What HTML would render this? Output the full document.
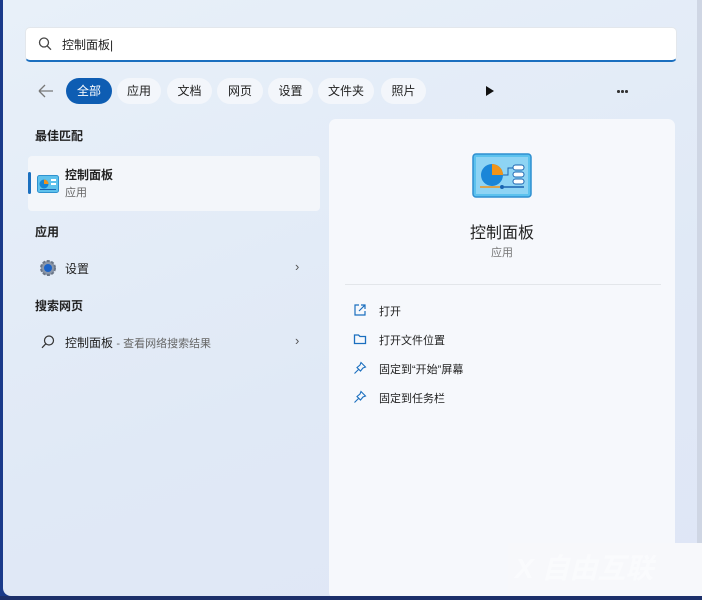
<!DOCTYPE html><html><head><meta charset="utf-8"><style>
body{margin:0;width:702px;height:600px;overflow:hidden;background:#1a3a8a;font-family:"Liberation Sans","Noto Sans CJK SC",sans-serif;position:relative}
.win{position:absolute;left:3px;top:-8px;width:694px;height:604px;border-radius:8px;background:linear-gradient(160deg,#e8f0f9,#e0e9f6 60%,#dfe6f6);}
.abs{position:absolute}
.search{left:25px;top:27px;width:650px;height:32px;background:#fff;border-radius:5px;border:1px solid #e3e7ec;border-bottom:2px solid #1b6fbf;box-sizing:content-box}
.chip{position:absolute;top:78px;height:26px;line-height:26px;border-radius:13px;background:#f3f6fb;font-size:12px;color:#222;text-align:center}
.hdr{font-size:12px;font-weight:bold;color:#222}
.right{left:329px;top:119px;width:346px;height:480px;background:#f6f8fc;border-radius:7px}
.act{position:absolute;left:379px;font-size:11px;color:#222}
.dot{position:absolute;top:90px;width:2.5px;height:2.5px;border-radius:50%;background:#333}
</style></head><body>
<div class="abs" style="left:697px;top:0;width:5px;height:545px;background:#cfd6e4"></div>
<div class="win"></div>
<div class="abs search"></div>
<svg class="abs" style="left:37px;top:36px" width="16" height="16"><circle cx="7" cy="6.5" r="4.5" fill="none" stroke="#444" stroke-width="1.3"/><line x1="10.3" y1="10" x2="14" y2="13.7" stroke="#444" stroke-width="1.3"/></svg>
<div class="abs" style="left:62px;top:36px;font-size:12px;color:#222">控制面板|</div>
<svg class="abs" style="left:37px;top:83px" width="18" height="16"><path d="M2 8H16M2 8L8 2M2 8L8 14" fill="none" stroke="#777" stroke-width="1.3"/></svg>
<div class="chip" style="left:66px;width:46px;background:#0e5db3;color:#fff">全部</div>
<div class="chip" style="left:117px;width:44px">应用</div>
<div class="chip" style="left:167px;width:45px">文档</div>
<div class="chip" style="left:217px;width:46px">网页</div>
<div class="chip" style="left:268px;width:45px">设置</div>
<div class="chip" style="left:318px;width:56px">文件夹</div>
<div class="chip" style="left:381px;width:45px">照片</div>
<svg class="abs" style="left:485px;top:85px" width="10" height="12"><path d="M1 1L9 6L1 11Z" fill="#111"/></svg>
<div class="dot" style="left:617px"></div><div class="dot" style="left:621px"></div><div class="dot" style="left:625px"></div>
<div class="abs hdr" style="left:35px;top:127px">最佳匹配</div>
<div class="abs" style="left:28px;top:156px;width:292px;height:55px;background:#f3f6fa;border-radius:4px"></div>
<div class="abs" style="left:28px;top:172px;width:3px;height:22px;background:#1b6fbf;border-radius:2px"></div>
<svg class="abs" style="left:37px;top:175px" width="22" height="18"><rect x="0.5" y="0.5" width="21" height="17" rx="2" fill="#5ec1ec" stroke="#2f92cf"/><circle cx="7" cy="9" r="4.5" fill="#1685d6"/><path d="M7 4.5A4.5 4.5 0 0 1 11.5 9H7Z" fill="#f2931b"/><rect x="14" y="4" width="5" height="2" fill="#fff"/><rect x="14" y="8" width="5" height="2" fill="#fff"/><rect x="3" y="14" width="16" height="1" fill="#1a64b0"/></svg>
<div class="abs" style="left:65px;top:166px;font-size:12px;font-weight:bold;color:#222">控制面板</div>
<div class="abs" style="left:65px;top:184px;font-size:11px;color:#666">应用</div>
<div class="abs hdr" style="left:35px;top:223px">应用</div>
<svg class="abs" style="left:38px;top:259px" width="20" height="18"><circle cx="10" cy="9" r="7" fill="#8a96a8" stroke="#6b7687" stroke-dasharray="3 1.5" stroke-width="2"/><circle cx="10" cy="9" r="4" fill="#1b63c8"/></svg>
<div class="abs" style="left:65px;top:260px;font-size:12px;color:#222">设置</div>
<div class="abs" style="left:295px;top:259px;font-size:13px;color:#555">›</div>
<div class="abs hdr" style="left:35px;top:297px">搜索网页</div>
<svg class="abs" style="left:40px;top:334px" width="16" height="16"><circle cx="9" cy="6.5" r="4.5" fill="none" stroke="#333" stroke-width="1.2"/><line x1="5.8" y1="9.8" x2="2" y2="13.8" stroke="#333" stroke-width="1.2"/></svg>
<div class="abs" style="left:65px;top:334px;font-size:12px;color:#222">控制面板 <span style="font-size:11px;color:#666">- 查看网络搜索结果</span></div>
<div class="abs" style="left:295px;top:333px;font-size:13px;color:#555">›</div>
<div class="abs right"></div>
<svg class="abs" style="left:472px;top:153px" width="60" height="45"><rect x="1" y="1" width="58" height="43" rx="3" fill="#5cc2ee" stroke="#2f8fd0" stroke-width="1.5"/><rect x="4" y="4" width="52" height="37" fill="#8ed4f4"/><circle cx="20" cy="22" r="11" fill="#1a86d8"/><path d="M20 11A11 11 0 0 1 31 22H20Z" fill="#f29418"/><path d="M31 22H36V15H42" fill="none" stroke="#1a64b0"/><rect x="41" y="12" width="11" height="5" rx="2.5" fill="#fff" stroke="#1a64b0"/><rect x="41" y="19" width="11" height="5" rx="2.5" fill="#fff" stroke="#1a64b0"/><rect x="41" y="26" width="11" height="5" rx="2.5" fill="#fff" stroke="#1a64b0"/><line x1="8" y1="34" x2="28" y2="34" stroke="#f29418" stroke-width="1.5"/><line x1="32" y1="34" x2="52" y2="34" stroke="#1a64b0" stroke-width="1.5"/><circle cx="30" cy="34" r="2" fill="#1a64b0"/></svg>
<div class="abs" style="left:329px;width:346px;top:219px;text-align:center;font-size:16px;color:#222">控制面板</div>
<div class="abs" style="left:329px;width:346px;top:244px;text-align:center;font-size:11px;color:#777">应用</div>
<div class="abs" style="left:345px;top:284px;width:316px;height:1px;background:#e3e6ea"></div>
<svg class="abs" style="left:353px;top:303px" width="14" height="14"><path d="M6 2H2V12H12V8M8 2H12V6M12 2L6 8" fill="none" stroke="#1b6fbf" stroke-width="1.2"/></svg>
<div class="act" style="top:303px">打开</div>
<svg class="abs" style="left:353px;top:332px" width="14" height="14"><path d="M1.5 3H5.5L7 4.5H12.5V11.5H1.5Z" fill="none" stroke="#1b6fbf" stroke-width="1.3"/></svg>
<div class="act" style="top:332px">打开文件位置</div>
<svg class="abs" style="left:353px;top:361px" width="14" height="14"><path d="M8 1.5L12.5 6L10 7L7.5 10L4 6.5L7 4Z M5.5 8.5L1.5 12.5" fill="none" stroke="#1b6fbf" stroke-width="1.1"/></svg>
<div class="act" style="top:361px">固定到“开始”屏幕</div>
<svg class="abs" style="left:353px;top:390px" width="14" height="14"><path d="M8 1.5L12.5 6L10 7L7.5 10L4 6.5L7 4Z M5.5 8.5L1.5 12.5" fill="none" stroke="#1b6fbf" stroke-width="1.1"/></svg>
<div class="act" style="top:390px">固定到任务栏</div>
<div class="abs" style="left:0;top:596px;width:702px;height:4px;background:#1c2f6a"></div>
<div class="abs" style="left:508px;top:543px;width:194px;height:53px;background:#f7f8fb"></div>
<div class="abs" style="left:515px;top:547px;font-size:28px;font-weight:bold;font-style:italic;color:#fafbfd">X 自由互联</div>
</body></html>
